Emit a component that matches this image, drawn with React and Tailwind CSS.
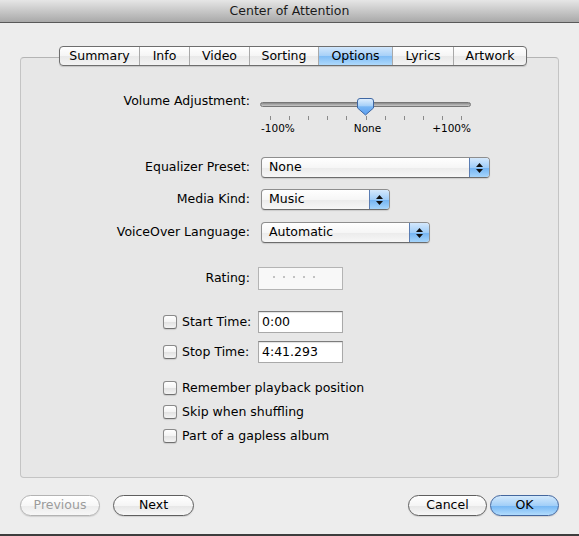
import React from "react";

const tabs = [
  ["Summary", "w-[79px]"],
  ["Info", "w-[50px]"],
  ["Video", "w-[60px]"],
  ["Sorting", "w-[69px]"],
  ["Options", "w-[74px]"],
  ["Lyrics", "w-[61px]"],
  ["Artwork", "w-[73px]"],
];

function Popup({ w, label }) {
  return (
    <div
      className={`flex h-[21px] items-stretch rounded-[4px] border border-[#8e8e8e] border-b-[#6c6c6c] bg-[linear-gradient(#ffffff,#f6f6f6_50%,#ebebeb_51%,#f7f7f7)] shadow-[0_1px_1px_rgba(0,0,0,0.12)] ${w}`}
    >
      <span className="flex flex-1 items-center pl-[7px] leading-none">{label}</span>
      <div className="flex w-[20px] flex-col items-center justify-center gap-[2px] rounded-r-[3px] border-l border-[#5a7db3] bg-[linear-gradient(#d4e8fc,#a0cdf8_50%,#72b3f3_51%,#a6d5fb)]">
        <svg width="7" height="4" viewBox="0 0 7 4">
          <path d="M3.5 0 L7 4 L0 4Z" fill="#111" />
        </svg>
        <svg width="7" height="4" viewBox="0 0 7 4">
          <path d="M0 0 L7 0 L3.5 4Z" fill="#111" />
        </svg>
      </div>
    </div>
  );
}

function Checkbox() {
  return (
    <div className="h-[14px] w-[14px] shrink-0 rounded-[3px] border border-[#8a8a8a] border-b-[#707070] bg-[linear-gradient(#ffffff,#f3f3f3_50%,#e2e2e2_51%,#f4f4f4)] shadow-[0_1px_1px_rgba(0,0,0,0.12)]" />
  );
}

function Field({ value }) {
  return (
    <div className="ml-[8px] flex h-[22px] w-[85px] shrink-0 items-center border border-[#a9a9a9] border-t-[#7c7c7c] bg-white pl-[3px] shadow-[inset_0_1px_1px_rgba(0,0,0,0.12)]">
      {value}
    </div>
  );
}

function Slider() {
  const ticks = Array.from({ length: 11 }, (_, i) => 10 + i * 19.1);
  return (
    <div className="relative ml-[10px] h-[40px] w-[211px]">
      <div className="absolute left-0 right-0 top-[8px] h-[5px] rounded-full border border-[#777] bg-[linear-gradient(#8a8a8a,#c9c9c9)]" />
      <svg className="absolute left-[97px] top-[4px]" width="17" height="18" viewBox="0 0 17 18">
        <defs>
          <linearGradient id="th" x1="0" y1="0" x2="0" y2="1">
            <stop offset="0" stopColor="#e2f0fe" />
            <stop offset="0.45" stopColor="#a5cff8" />
            <stop offset="0.5" stopColor="#78b6f4" />
            <stop offset="1" stopColor="#5c9ff0" />
          </linearGradient>
        </defs>
        <path
          d="M3 0.5 H14 Q16.5 0.5 16.5 3 V10 L8.5 17 L0.5 10 V3 Q0.5 0.5 3 0.5Z"
          fill="url(#th)"
          stroke="#3f67a3"
        />
      </svg>
      {ticks.map((x, i) => (
        <div
          key={i}
          className="absolute top-[22px] h-[4px] w-[1px] bg-[#8a8a8a]"
          style={{ left: `${x}px` }}
        />
      ))}
      <div className="absolute left-0 right-0 top-[28px] flex justify-between text-[10.5px] leading-[12px]">
        <span className="pl-[1px]">-100%</span>
        <span className="pl-[8px]">None</span>
        <span>+100%</span>
      </div>
    </div>
  );
}

function Button({ children, className }) {
  return (
    <div
      className={`flex h-[21px] items-center justify-center rounded-full border shadow-[0_1px_1px_rgba(0,0,0,0.12)] ${className}`}
    >
      {children}
    </div>
  );
}

export default function App() {
  return (
    <div className="flex h-[536px] w-[579px] flex-col overflow-hidden bg-[#ededed] font-['DejaVu_Sans',sans-serif] text-[12.5px] text-black">
      <div className="h-[23px] shrink-0 border-b border-[#595959] bg-[linear-gradient(#e6e6e6,#a9a9a9)] text-center leading-[22px] text-[#1a1a1a]">
        Center of Attention
      </div>

      <div className="relative z-10 mt-[23px] flex">
        <div className="ml-[59px] flex h-[20px] overflow-hidden rounded-[4px] border border-[#6e6e6e] bg-[linear-gradient(#ffffff,#f5f5f5_50%,#e9e9e9_51%,#f3f3f3)] shadow-[0_1px_1px_rgba(0,0,0,0.15)]">
          {tabs.map(([t, w], i) => (
            <div
              key={t}
              className={`flex items-center justify-center leading-none ${w} ${
                i > 0 ? "border-l border-[#a9a9a9]" : ""
              } ${
                t === "Options"
                  ? "bg-[linear-gradient(#d2e7fc,#a6d0f8_50%,#7fbcf5_51%,#aed9fc)]"
                  : ""
              }`}
            >
              {t}
            </div>
          ))}
        </div>
      </div>

      <div className="mx-[20px] -mt-[9px] flex h-[421px] flex-col rounded-[4px] border border-[#c4c4c4] border-t-[#b4b4b4] bg-[#e7e7e7] pt-[36px]">
        <div className="flex items-start">
          <div className="w-[229px] text-right leading-[14px]">Volume Adjustment:</div>
          <Slider />
        </div>

        <div className="mt-[23px] flex items-center">
          <div className="w-[229px] text-right">Equalizer Preset:</div>
          <div className="ml-[11px]">
            <Popup w="w-[229px]" label="None" />
          </div>
        </div>

        <div className="mt-[11px] flex items-center">
          <div className="w-[229px] text-right">Media Kind:</div>
          <div className="ml-[11px]">
            <Popup w="w-[129px]" label="Music" />
          </div>
        </div>

        <div className="mt-[12px] flex items-center">
          <div className="w-[229px] text-right">VoiceOver Language:</div>
          <div className="ml-[11px]">
            <Popup w="w-[169px]" label="Automatic" />
          </div>
        </div>

        <div className="mt-[24px] flex items-center">
          <div className="w-[229px] text-right">Rating:</div>
          <div className="ml-[8px] flex h-[23px] w-[85px] items-start gap-[8px] border border-[#b4b4b4] bg-[#f8f8f8] pl-[14px] pt-[8px]">
            {[0, 1, 2, 3, 4].map((i) => (
              <div key={i} className="h-[2px] w-[2px] rounded-full bg-[#b0b0b0]" />
            ))}
          </div>
        </div>

        <div className="mt-[21px] flex items-center">
          <div className="flex w-[229px] shrink-0 items-center gap-[5px] whitespace-nowrap pl-[142px]">
            <Checkbox />
            <span>Start Time:</span>
          </div>
          <Field value="0:00" />
        </div>

        <div className="mt-[8px] flex items-center">
          <div className="flex w-[229px] shrink-0 items-center gap-[5px] whitespace-nowrap pl-[142px]">
            <Checkbox />
            <span>Stop Time:</span>
          </div>
          <Field value="4:41.293" />
        </div>

        {[
          ["Remember playback position", "mt-[16px]"],
          ["Skip when shuffling", "mt-[6px]"],
          ["Part of a gapless album", "mt-[6px]"],
        ].map(([t, m]) => (
          <div key={t} className={`flex h-[18px] items-center gap-[5px] whitespace-nowrap pl-[142px] ${m}`}>
            <Checkbox />
            <span>{t}</span>
          </div>
        ))}
      </div>

      <div className="mt-[17px] flex">
        <Button className="ml-[20px] w-[80px] border-[#b3b3b3] bg-[linear-gradient(#ffffff,#f7f7f7_50%,#ececec_51%,#f7f7f7)] text-[#9c9c9c]">
          Previous
        </Button>
        <Button className="ml-[13px] w-[81px] border-[#5f5f5f] bg-[linear-gradient(#ffffff,#f5f5f5_50%,#e6e6e6_51%,#f7f7f7)]">
          Next
        </Button>
        <Button className="ml-auto w-[79px] border-[#5f5f5f] bg-[linear-gradient(#ffffff,#f5f5f5_50%,#e6e6e6_51%,#f7f7f7)]">
          Cancel
        </Button>
        <Button className="ml-[3px] mr-[20px] w-[69px] border-[#44679e] bg-[linear-gradient(#d3e9fc,#a2cff8_50%,#74b6f4_51%,#b2dcfd)]">
          OK
        </Button>
      </div>

      <div className="flex-1" />
      <div className="h-[2px] shrink-0 bg-[#3d3d3d]" />
    </div>
  );
}
